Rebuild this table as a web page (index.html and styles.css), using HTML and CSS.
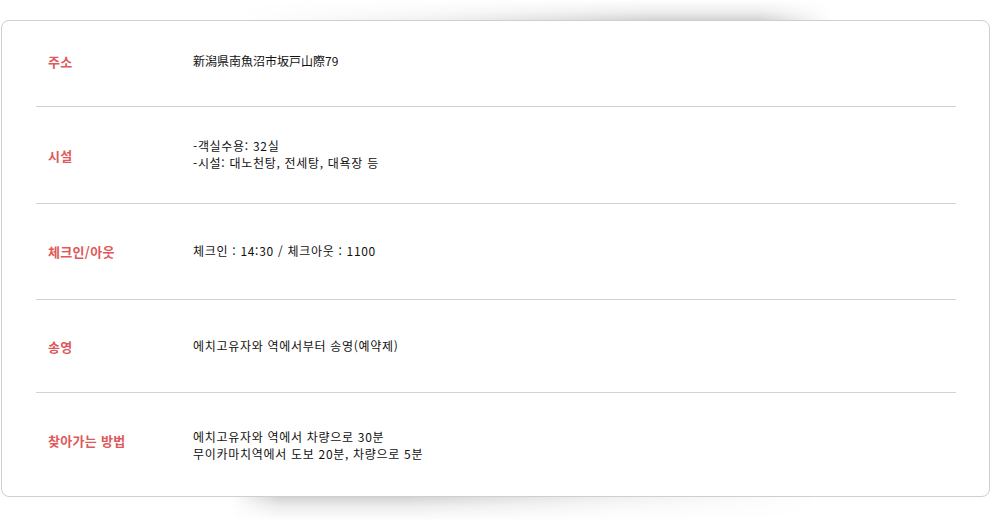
FILE: index.html
```html
<!DOCTYPE html>
<html lang="ko">
<head>
<meta charset="utf-8">
<link rel="stylesheet" href="styles.css">
</head>
<body>
<div class="shadow-top"></div>
<div class="card">
  <div class="row r1">
    <div class="label">주소</div>
    <div class="value jp">新潟県南魚沼市坂戸山際79</div>
  </div>
  <div class="row r2">
    <div class="label">시설</div>
    <div class="value">-객실수용: 32실<br>-시설: 대노천탕, 전세탕, 대욕장 등</div>
  </div>
  <div class="row r3">
    <div class="label">체크인/아웃</div>
    <div class="value">체크인 : 14:30 / 체크아웃 : 1100</div>
  </div>
  <div class="row r4">
    <div class="label">송영</div>
    <div class="value">에치고유자와 역에서부터 송영(예약제)</div>
  </div>
  <div class="row r5">
    <div class="label">찾아가는 방법</div>
    <div class="value">에치고유자와 역에서 차량으로 30분<br>무이카마치역에서 도보 20분, 차량으로 5분</div>
  </div>
</div>
<div class="shadow-bottom"></div>
</body>
</html>
```

FILE: styles.css
```css
html, body {
  margin: 0;
  padding: 0;
  background: #fff;
}
body {
  padding: 0 0 0 1px;
  font-family: "Noto Sans CJK KR", "Noto Sans", sans-serif;
}
.shadow-top {
  height: 20px;
  margin-left: 230px;
  width: 600px;
  background: linear-gradient(to top, rgba(0,0,0,0.17), rgba(0,0,0,0.07) 40%, rgba(0,0,0,0) 100%);
  -webkit-mask-image: linear-gradient(to right, transparent 0%, rgba(0,0,0,0.35) 35%, #000 70%, #000 88%, transparent 100%);
  mask-image: linear-gradient(to right, transparent 0%, rgba(0,0,0,0.35) 35%, #000 70%, #000 88%, transparent 100%);
}
.shadow-bottom {
  height: 24px;
  margin-left: 230px;
  width: 590px;
  background: linear-gradient(to bottom, rgba(0,0,0,0.17), rgba(0,0,0,0.07) 40%, rgba(0,0,0,0) 100%);
  -webkit-mask-image: linear-gradient(to right, transparent 0%, #000 8%, #000 30%, rgba(0,0,0,0.35) 65%, transparent 100%);
  mask-image: linear-gradient(to right, transparent 0%, #000 8%, #000 30%, rgba(0,0,0,0.35) 65%, transparent 100%);
}
.card {
  box-sizing: border-box;
  width: 989px;
  height: 477px;
  border: 1px solid #cfcfcf;
  border-radius: 8px;
  background: #fff;
  padding: 0 33px 0 34px;
  display: flex;
  flex-direction: column;
}
.row {
  display: flex;
  align-items: center;
  border-bottom: 1px solid #d2d2d2;
}
.row.r1 { box-sizing: content-box; height: 81px; padding-bottom: 4px; }
.row.r2 { height: 96px; }
.row.r3 { height: 95px; }
.row.r4 { height: 92px; }
.row.r5 { flex: 1; border-bottom: none; }
.label {
  width: 145px;
  padding-left: 12px;
  flex: none;
  color: #e0585a;
  font-size: 13px;
  font-weight: 700;
  letter-spacing: 0.3px;
  line-height: 17px;
}
.r5 .label {
  margin-bottom: 9px;
}
.value {
  color: #111;
  font-size: 12px;
  line-height: 17px;
  letter-spacing: 0.7px;
  padding-bottom: 2px;
}
.value.jp {
  letter-spacing: 0;
}
.r5 .value {
  padding-bottom: 0;
}
```
